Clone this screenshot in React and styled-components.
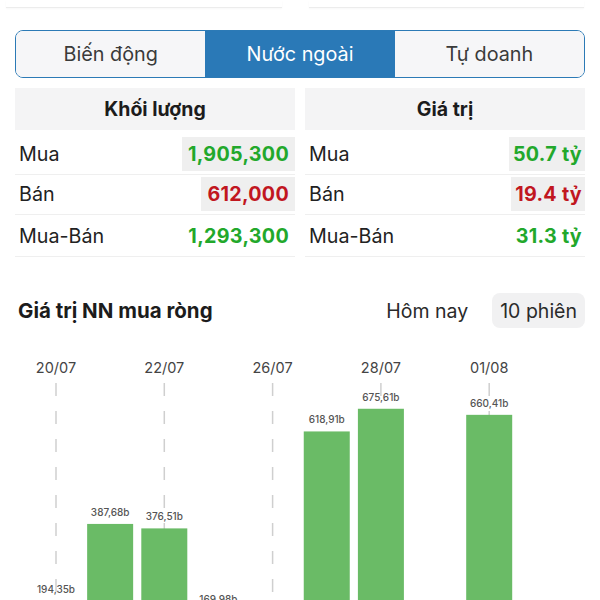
import React from 'react';
import styled, { createGlobalStyle } from 'styled-components';

const GlobalStyle = createGlobalStyle`
  body {
    margin: 0;
    background: #ffffff;
    font-family: Inter, "Noto Sans", "Liberation Sans", sans-serif;
    color: #222;
    overflow: hidden;
  }
`;

const Page = styled.div`
  width: 600px;
`;

// faint bottom edges of the cards above
const TopCards = styled.div`
  display: flex;
  gap: 27px;
  padding: 0 16px 0 6px;
`;

const TopCard = styled.div`
  flex: 1;
  height: 7px;
  border-bottom: 1px solid #ececec;
  box-shadow: 0 1px 2px rgba(0, 0, 0, 0.03);
`;

const Segmented = styled.div`
  margin: 22px 15px 0;
  height: 48px;
  box-sizing: border-box;
  border: 1.5px solid #2c7ab6;
  border-radius: 8px;
  overflow: hidden;
  display: grid;
  grid-template-columns: 1fr 1fr 1fr;
`;

const Segment = styled.div`
  display: flex;
  align-items: center;
  justify-content: center;
  font-size: 19.8px;
  background: ${p => (p.$active ? '#2a79b7' : '#f6f6f8')};
  color: ${p => (p.$active ? '#ffffff' : '#3a3a3a')};
`;

const Tables = styled.div`
  margin: 10px 15px 0;
  display: grid;
  grid-template-columns: 1fr 1fr;
  gap: 10px;
`;

const Table = styled.div`
  display: flex;
  flex-direction: column;
`;

const TableHead = styled.div`
  height: 42px;
  background: #f4f4f5;
  display: flex;
  align-items: center;
  justify-content: center;
  font-size: 19.5px;
  font-weight: 700;
  color: #1c1c1c;
`;

const Row = styled.div`
  box-sizing: border-box;
  height: ${p => p.$h}px;
  border-bottom: 1px solid #efefef;
  display: flex;
  align-items: flex-end;
  justify-content: space-between;
  padding: 0 0 3px 4px;
  font-size: 19.7px;
`;

const Label = styled.span`
  color: #222;
  height: 34px;
  display: flex;
  align-items: center;
`;

const Value = styled.span`
  font-weight: 700;
  color: ${p => (p.$red ? '#c1161f' : '#22a82b')};
  background: ${p => (p.$boxed ? '#efefef' : 'transparent')};
  padding: 0 ${p => (p.$tight ? 3 : 6)}px 0 ${p => (p.$tight ? 4 : 6)}px;
  height: 34px;
  display: flex;
  align-items: center;
  letter-spacing: 0.3px;
`;

const ChartHeader = styled.div`
  margin: 36px 15px 0 18px;
  height: 35px;
  display: flex;
  align-items: center;
  justify-content: space-between;
`;

const ChartTitle = styled.div`
  font-size: 20.5px;
  font-weight: 700;
  color: #1c1c1c;
`;

const RangeTabs = styled.div`
  display: flex;
  align-items: center;
  gap: 10px;
`;

const RangeTab = styled.div`
  font-size: 19.5px;
  color: #2a2a2a;
  height: 35px;
  display: flex;
  align-items: center;
  padding: 0 ${p => (p.$active ? 8 : 14)}px;
  border-radius: 8px;
  background: ${p => (p.$active ? '#f1f1f2' : 'transparent')};
`;

const ChartWrap = styled.div`
  margin-top: 13px;
  height: 300px;
`;

const tables = [
  {
    title: 'Khối lượng',
    rows: [
      { label: 'Mua', value: '1,905,300', boxed: true },
      { label: 'Bán', value: '612,000', boxed: true, red: true },
      { label: 'Mua-Bán', value: '1,293,300' },
    ],
  },
  {
    title: 'Giá trị',
    rows: [
      { label: 'Mua', value: '50.7 tỷ', boxed: true },
      { label: 'Bán', value: '19.4 tỷ', boxed: true, red: true },
      { label: 'Mua-Bán', value: '31.3 tỷ' },
    ],
  },
];

const rowHeights = [45, 40, 42];

const sessions = [
  { date: '20/07', value: 194.35 },
  { date: '21/07', value: 387.68 },
  { date: '22/07', value: 376.51 },
  { date: '25/07', value: 169.98 },
  { date: '26/07', value: null },
  { date: '27/07', value: 618.91 },
  { date: '28/07', value: 675.61 },
  { date: '29/07', value: null },
  { date: '01/08', value: 660.41 },
];

const fmt = v => v.toFixed(2).replace('.', ',') + 'b';

const NetBuyChart = () => {
  const step = 54.15;
  const base = 338;
  const k = 0.4;
  const w = 46;
  return (
    <svg width="600" height="300" viewBox="0 0 600 300">
      {sessions.map((s, i) => {
        if (i % 2) return null;
        const x = 56 + step * i;
        return (
          <g key={s.date}>
            <text x={x} y={32} textAnchor="middle" fontSize="14.5" fill="#444"
              fontFamily="Inter, 'Liberation Sans', sans-serif">{s.date}</text>
            <line x1={x} x2={x} y1={42} y2={300} stroke="#cfcfcf"
              strokeWidth="1.5" strokeDasharray="13 15" />
          </g>
        );
      })}
      {sessions.map((s, i) => {
        if (s.value == null) return null;
        const x = 56 + step * i;
        const top = base - s.value * k;
        return (
          <g key={'b' + s.date}>
            <rect x={x - w / 2} y={top} width={w} height={base - top} fill="#6abb66" />
            <text x={x} y={top - 8} textAnchor="middle" fontSize="10" fontWeight="500"
              fill="#555" fontFamily="Inter, 'Liberation Sans', sans-serif">{fmt(s.value)}</text>
          </g>
        );
      })}
    </svg>
  );
};

export default function App() {
  return (
    <Page>
      <GlobalStyle />
      <TopCards>
        <TopCard />
        <TopCard />
      </TopCards>
      <Segmented>
        <Segment>Biến động</Segment>
        <Segment $active>Nước ngoài</Segment>
        <Segment>Tự doanh</Segment>
      </Segmented>
      <Tables>
        {tables.map((t, ti) => (
          <Table key={t.title}>
            <TableHead>{t.title}</TableHead>
            {t.rows.map((r, i) => (
              <Row key={r.label} $h={rowHeights[i]}>
                <Label>{r.label}</Label>
                <Value $boxed={r.boxed} $red={r.red} $tight={ti === 1}>{r.value}</Value>
              </Row>
            ))}
          </Table>
        ))}
      </Tables>
      <ChartHeader>
        <ChartTitle>Giá trị NN mua ròng</ChartTitle>
        <RangeTabs>
          <RangeTab>Hôm nay</RangeTab>
          <RangeTab $active>10 phiên</RangeTab>
        </RangeTabs>
      </ChartHeader>
      <ChartWrap>
        <NetBuyChart />
      </ChartWrap>
    </Page>
  );
}
